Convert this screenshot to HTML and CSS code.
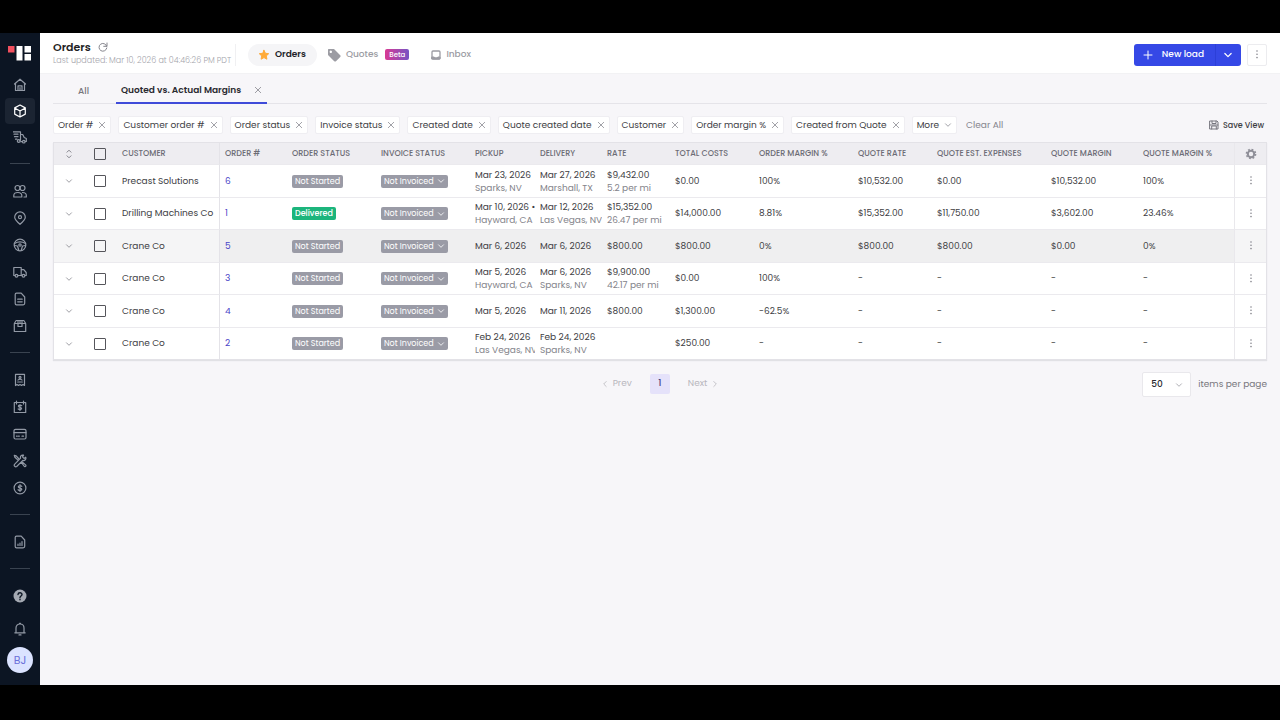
FILE: index.html
```html
<!DOCTYPE html>
<html lang="en">
<head>
<meta charset="utf-8">
<meta name="viewport" content="width=device-width, initial-scale=1">
<title>Orders</title>
<link rel="stylesheet" href="styles.css">
</head>
<body>
<svg class="sprite" aria-hidden="true">
  <symbol id="i-x" viewBox="0 0 8 8"><path d="M1.300 1.300l5.400 5.400M6.700 1.300L1.300 6.700"/></symbol>
  <symbol id="i-down" viewBox="0 0 8 8"><path d="M1.500 2.800L4 5.300l2.500-2.500"/></symbol>
  <symbol id="i-dots" viewBox="0 0 4 12"><g fill="currentColor" stroke="none"><circle cx="2" cy="2" r=".8"/><circle cx="2" cy="5.300" r=".8"/><circle cx="2" cy="8.600" r=".8"/></g></symbol>
</svg>
<div class="app">
  <aside class="sidebar">
    <svg class="logo" viewBox="0 0 24 16" aria-label="Logo"><path fill="#f2505f" d="M0 0h6.500v6.500H0z"/><path fill="#fff" d="M8.500 0h6v14.500h-6zM16.500 0h6.500v6.500h-6.500zM16.500 8h6.500v6.500h-6.500z"/></svg>
    <nav class="nav" aria-label="Main">
      <div class="group group-top">
        <a href="#" class="nav-item" aria-label="Home"><svg viewBox="0 0 14 14"><path d="M1.500 6L7 1.200 12.500 6M2.500 5.300v7.200h9V5.300M5 12.300V7.800h4v4.500M7 9.500v2.500"/></svg></a>
        <a href="#" class="nav-item active" aria-label="Orders"><svg viewBox="0 0 14 14"><path d="M7 1l5.300 2.900v6.200L7 13l-5.300-2.900V3.900zM1.700 3.900L7 6.900l5.300-3M7 6.900V13"/></svg></a>
        <a href="#" class="nav-item" aria-label="Dispatch"><svg viewBox="0 0 14 14"><path d="M0 1.800h7.500v8.400H7M1 4.200h4M1.500 6.700H5M2.500 9.200H4M7.500 4.500h2.200l1.500 3 2.100 1v3h-1.100M9.300 11.700H7.800"/><circle cx="5.700" cy="11" r="1.400"/><circle cx="10.800" cy="11.700" r="1.300"/></svg></a>
      </div>
      <hr class="sep">
      <div class="group">
        <a href="#" class="nav-item" aria-label="Customers"><svg viewBox="0 0 14 14"><circle cx="4.500" cy="4" r="2.500"/><circle cx="9.500" cy="4" r="2.500"/><path d="M.8 13v-1.500c0-2 1.500-3 4-3s4 1 4 3V13zM9.500 8.500c2.500 0 3.800 1.200 3.800 3V13H11"/></svg></a>
        <a href="#" class="nav-item" aria-label="Locations"><svg viewBox="0 0 14 14"><path d="M7 13.300C4 10.700 1.700 8.700 1.700 6.200a5.300 5.300 0 0 1 10.600 0c0 2.500-2.300 4.500-5.300 7.100z"/><circle cx="7" cy="6.200" r="1.500"/></svg></a>
        <a href="#" class="nav-item" aria-label="Drivers"><svg viewBox="0 0 14 14"><circle cx="7" cy="7" r="5.800"/><path d="M1.500 5.500C5 3.500 9 3.500 12.500 5.500M1.500 7.500L4.500 8l1.300 4.500M12.500 7.500L9.500 8l-1.300 4.500"/><circle cx="7" cy="7" r="1.200"/></svg></a>
        <a href="#" class="nav-item" aria-label="Trucks"><svg viewBox="0 0 14 14"><path d="M2 10.500H.8V2.500h7.400v8H5M8.200 4.700h2.600l2.400 2.800v3H12M8.200 10.500H9"/><circle cx="3.500" cy="10.800" r="1.400"/><circle cx="10.500" cy="10.800" r="1.400"/></svg></a>
        <a href="#" class="nav-item" aria-label="Documents"><svg viewBox="0 0 14 14"><path d="M3.500 1.200h4.700L11.700 5v6.300c0 1-.5 1.500-1.500 1.500H3.500c-.8 0-1.300-.5-1.300-1.300v-9c0-.8.500-1.300 1.300-1.300zM4.700 7.200h4.500M4.700 9.800h4.500"/></svg></a>
        <a href="#" class="nav-item" aria-label="Inventory"><svg viewBox="0 0 14 14"><path d="M1.300 4.500h11.400v8H1.300zM1.300 4.500l1.900-3h7.600l1.900 3M5 1.500v6h4v-6M7 1.500v3"/></svg></a>
      </div>
      <hr class="sep">
      <div class="group">
        <a href="#" class="nav-item" aria-label="Bills"><svg viewBox="0 0 14 14"><path d="M2.500 1.300h9v11.200l-1.500-1-1.500 1-1.500-1-1.500 1-1.500-1-1.500 1zM4.700 9h4.600"/><circle cx="7" cy="4.400" r="1"/><path d="M5 7c.8-1 3.200-1 4 0"/></svg></a>
        <a href="#" class="nav-item" aria-label="Payroll"><svg viewBox="0 0 14 14"><path d="M1.300 2.500h11.400v10H1.300zM3.500 1v3M10.500 1v3M8.700 5.700c-1-.9-3.400-.6-3.300.6.100 1.300 3.200.9 3.200 2.300 0 1.200-2.300 1.400-3.400.4M7 4.700v5.700"/></svg></a>
        <a href="#" class="nav-item" aria-label="Cards"><svg viewBox="0 0 14 14"><rect x="1" y="2.300" width="12" height="9.700" rx="1.500"/><path d="M1 5.700h12M3.500 9.200h.8M5.500 9.200h.8M9 9.200h1.500"/></svg></a>
        <a href="#" class="nav-item" aria-label="Maintenance"><svg viewBox="0 0 14 14"><path d="M1.300 1.300l1.900.5 2.800 3.200M1.300 1.300l.6 1.900L5 6.100M8.300 8.300l3.100 4.200c1.200.5 2-.7 1.200-1.600L9.500 8.200M12.700 3.200L11 4.400l-1.500-1.500 1.100-1.700C8 .6 7 2.500 7.600 4.200L1.500 10.300c-1 1.400.9 3.200 2.200 2.200l6.100-6.100c1.900.6 3.700-1.200 2.900-3.200z"/></svg></a>
        <a href="#" class="nav-item" aria-label="Payments"><svg viewBox="0 0 14 14"><circle cx="7" cy="7" r="5.900"/><path d="M8.800 5.300c-1-1-3.600-.7-3.500.6.100 1.400 3.500 1 3.500 2.400 0 1.300-2.600 1.400-3.700.4M7 3.500v7"/></svg></a>
      </div>
      <hr class="sep">
      <div class="group">
        <a href="#" class="nav-item" aria-label="Reports"><svg viewBox="0 0 14 14"><path d="M3.500 1.200h4.700L11.700 5v6.300c0 1-.5 1.500-1.500 1.500H3.500c-.8 0-1.300-.5-1.300-1.300v-9c0-.8.500-1.300 1.300-1.300zM5 10.500V9.200M7 10.500V8M9 10.500V6.500"/></svg></a>
      </div>
      <hr class="sep">
      <div class="group">
        <a href="#" class="nav-item" aria-label="Help"><svg viewBox="0 0 14 14"><circle cx="7" cy="7" r="6.500" fill="#a4a9b2" stroke="none"/><path stroke="#0c1523" stroke-width="1.400" d="M5 5.500c.1-2.300 4-2.300 4 0 0 1.400-2 1.500-2 3M7 10.300v.4"/></svg></a>
      </div>
    </nav>
    <button class="nav-item bell" aria-label="Notifications"><svg viewBox="0 0 14 14"><path d="M1.800 10.800h10.400M3 10.800V6c0-2.300 1.500-4 4-4s4 1.700 4 4v4.800M6.500 1.300h1M6 12.900h2"/></svg></button>
    <button class="avatar">BJ</button>
  </aside>

  <main class="main">
    <header class="topbar">
      <div class="title-block">
        <div class="title-row"><h1>Orders</h1><button class="plain" aria-label="Refresh"><svg class="ic10" viewBox="0 0 10 10"><path d="M8.700 4.200A3.900 3.900 0 1 0 8.800 6M9 1v3.300H5.700"/></svg></button></div>
        <p class="updated">Last updated: Mar 10, 2026 at 04:46:26 PM PDT</p>
      </div>
      <nav class="modes" aria-label="Views">
        <a href="#" class="mode current"><svg class="ic12" viewBox="0 0 12 12"><path fill="#ffab38" stroke="#ffab38" d="M6 1.300l1.400 3 3.300.4-2.400 2.200.6 3.300L6 8.600l-2.900 1.600.6-3.300L1.300 4.700l3.300-.4z"/></svg>Orders</a>
        <a href="#" class="mode quotes"><svg class="ic14" viewBox="0 0 14 14"><path fill="#9c9ca3" stroke="none" fill-rule="evenodd" d="M1.500 1H7l6 6c.8.800.8 1.500 0 2.200L9.200 13c-.7.700-1.400.7-2.200 0L1 7V1.500zM3.800 2.600a1.200 1.200 0 1 0 .01 0z"/></svg>Quotes<span class="beta">Beta</span></a>
        <a href="#" class="mode inbox"><svg class="ic10" viewBox="0 0 10 10"><rect x="1" y="1" width="8" height="8" rx="1" stroke-width="1.300"/><path d="M1 7h2l1 .8h2L7 7h2v2H1z" fill="#9c9ca3"/></svg>Inbox</a>
      </nav>
      <div class="split">
        <button class="new"><svg class="ic10" viewBox="0 0 10 10"><path d="M5 1v8M1 5h8"/></svg>New load</button>
        <button class="new-more" aria-label="More load options"><svg class="ic10" viewBox="0 0 8 8"><use href="#i-down"/></svg></button>
      </div>
      <button class="kebab-box" aria-label="Page options"><svg class="dots"><use href="#i-dots"/></svg></button>
    </header>

    <div class="content">
      <nav class="tabs" aria-label="Saved views">
        <a href="#" class="tab all">All</a>
        <div class="tab on"><a href="#">Quoted vs. Actual Margins</a><button class="plain" aria-label="Close view"><svg class="ic8"><use href="#i-x"/></svg></button></div>
      </nav>

      <div class="filters">
        <button class="chip">Order #<svg class="ic8"><use href="#i-x"/></svg></button>
        <button class="chip">Customer order #<svg class="ic8"><use href="#i-x"/></svg></button>
        <button class="chip">Order status<svg class="ic8"><use href="#i-x"/></svg></button>
        <button class="chip">Invoice status<svg class="ic8"><use href="#i-x"/></svg></button>
        <button class="chip">Created date<svg class="ic8"><use href="#i-x"/></svg></button>
        <button class="chip">Quote created date<svg class="ic8"><use href="#i-x"/></svg></button>
        <button class="chip">Customer<svg class="ic8"><use href="#i-x"/></svg></button>
        <button class="chip">Order margin %<svg class="ic8"><use href="#i-x"/></svg></button>
        <button class="chip">Created from Quote<svg class="ic8"><use href="#i-x"/></svg></button>
        <button class="chip">More<svg class="ic8"><use href="#i-down"/></svg></button>
        <button class="plain clear">Clear All</button>
        <button class="plain save"><svg class="ic10" viewBox="0 0 10 10"><path d="M1 1h7l1 1v7H1zM3 1v2.500h4V1M2.700 9V6h4.600v3M1 5h8"/></svg>Save View</button>
      </div>

      <table class="orders">
        <colgroup><col class="w30"><col class="w32"><col class="w104"><col class="w67"><col class="w89"><col class="w94"><col class="w65"><col class="w67"><col class="w68"><col class="w84"><col class="w99"><col class="w79"><col class="w114"><col class="w92"><col class="w96"><col class="w32"></colgroup>
        <thead>
          <tr><th class="mid"><button class="plain" aria-label="Expand all"><svg class="ic10" viewBox="0 0 10 10"><path d="M3 3.200l2-2 2 2M3 6.800l2 2 2-2"/></svg></button></th><th class="mid"><input type="checkbox" aria-label="Select all orders"></th><th class="edge">Customer</th><th>Order #</th><th>Order status</th><th>Invoice status</th><th>Pickup</th><th>Delivery</th><th>Rate</th><th>Total costs</th><th>Order margin %</th><th>Quote rate</th><th>Quote est. expenses</th><th>Quote margin</th><th>Quote margin %</th><th class="mid last"><button class="plain" aria-label="Table settings"><svg class="ic12 gear" viewBox="0 0 12 12"><circle cx="6" cy="6" r="3.200" stroke-width="2"/><circle cx="6" cy="6" r="4.600" stroke-width="1.500" stroke-dasharray="1.800 1.813"/></svg></button></th></tr>
        </thead>
        <tbody>
          <tr><td class="mid"><button class="plain" aria-label="Expand order 6"><svg class="ic8"><use href="#i-down"/></svg></button></td><td class="mid"><input type="checkbox" aria-label="Select order 6"></td><td class="edge">Precast Solutions</td><td><a href="#">6</a></td><td><span class="badge">Not Started</span></td><td><button class="badge">Not Invoiced<svg class="ic8"><use href="#i-down"/></svg></button></td><td>Mar 23, 2026<small>Sparks, NV</small></td><td>Mar 27, 2026<small>Marshall, TX</small></td><td>$9,432.00<small>5.2 per mi</small></td><td>$0.00</td><td>100%</td><td>$10,532.00</td><td>$0.00</td><td>$10,532.00</td><td>100%</td><td class="mid last"><button class="plain" aria-label="Order 6 actions"><svg class="dots"><use href="#i-dots"/></svg></button></td></tr>
          <tr><td class="mid"><button class="plain" aria-label="Expand order 1"><svg class="ic8"><use href="#i-down"/></svg></button></td><td class="mid"><input type="checkbox" aria-label="Select order 1"></td><td class="edge">Drilling Machines Co</td><td><a href="#">1</a></td><td><span class="badge green">Delivered</span></td><td><button class="badge">Not Invoiced<svg class="ic8"><use href="#i-down"/></svg></button></td><td>Mar 10, 2026 •<small>Hayward, CA</small></td><td>Mar 12, 2026<small>Las Vegas, NV</small></td><td>$15,352.00<small>26.47 per mi</small></td><td>$14,000.00</td><td>8.81%</td><td>$15,352.00</td><td>$11,750.00</td><td>$3,602.00</td><td>23.46%</td><td class="mid last"><button class="plain" aria-label="Order 1 actions"><svg class="dots"><use href="#i-dots"/></svg></button></td></tr>
          <tr class="hovered"><td class="mid"><button class="plain" aria-label="Expand order 5"><svg class="ic8"><use href="#i-down"/></svg></button></td><td class="mid"><input type="checkbox" aria-label="Select order 5"></td><td class="edge">Crane Co</td><td><a href="#">5</a></td><td><span class="badge">Not Started</span></td><td><button class="badge">Not Invoiced<svg class="ic8"><use href="#i-down"/></svg></button></td><td>Mar 6, 2026</td><td>Mar 6, 2026</td><td>$800.00</td><td>$800.00</td><td>0%</td><td>$800.00</td><td>$800.00</td><td>$0.00</td><td>0%</td><td class="mid last"><button class="plain" aria-label="Order 5 actions"><svg class="dots"><use href="#i-dots"/></svg></button></td></tr>
          <tr><td class="mid"><button class="plain" aria-label="Expand order 3"><svg class="ic8"><use href="#i-down"/></svg></button></td><td class="mid"><input type="checkbox" aria-label="Select order 3"></td><td class="edge">Crane Co</td><td><a href="#">3</a></td><td><span class="badge">Not Started</span></td><td><button class="badge">Not Invoiced<svg class="ic8"><use href="#i-down"/></svg></button></td><td>Mar 5, 2026<small>Hayward, CA</small></td><td>Mar 6, 2026<small>Sparks, NV</small></td><td>$9,900.00<small>42.17 per mi</small></td><td>$0.00</td><td>100%</td><td>-</td><td>-</td><td>-</td><td>-</td><td class="mid last"><button class="plain" aria-label="Order 3 actions"><svg class="dots"><use href="#i-dots"/></svg></button></td></tr>
          <tr><td class="mid"><button class="plain" aria-label="Expand order 4"><svg class="ic8"><use href="#i-down"/></svg></button></td><td class="mid"><input type="checkbox" aria-label="Select order 4"></td><td class="edge">Crane Co</td><td><a href="#">4</a></td><td><span class="badge">Not Started</span></td><td><button class="badge">Not Invoiced<svg class="ic8"><use href="#i-down"/></svg></button></td><td>Mar 5, 2026</td><td>Mar 11, 2026</td><td>$800.00</td><td>$1,300.00</td><td>-62.5%</td><td>-</td><td>-</td><td>-</td><td>-</td><td class="mid last"><button class="plain" aria-label="Order 4 actions"><svg class="dots"><use href="#i-dots"/></svg></button></td></tr>
          <tr><td class="mid"><button class="plain" aria-label="Expand order 2"><svg class="ic8"><use href="#i-down"/></svg></button></td><td class="mid"><input type="checkbox" aria-label="Select order 2"></td><td class="edge">Crane Co</td><td><a href="#">2</a></td><td><span class="badge">Not Started</span></td><td><button class="badge">Not Invoiced<svg class="ic8"><use href="#i-down"/></svg></button></td><td>Feb 24, 2026<small>Las Vegas, NV</small></td><td>Feb 24, 2026<small>Sparks, NV</small></td><td></td><td>$250.00</td><td>-</td><td>-</td><td>-</td><td>-</td><td>-</td><td class="mid last"><button class="plain" aria-label="Order 2 actions"><svg class="dots"><use href="#i-dots"/></svg></button></td></tr>
        </tbody>
      </table>

      <footer class="pager">
        <nav class="pages" aria-label="Pagination">
          <button class="plain step"><svg class="ic8 left"><use href="#i-down"/></svg>Prev</button>
          <button class="page">1</button>
          <button class="plain step">Next<svg class="ic8 right"><use href="#i-down"/></svg></button>
        </nav>
        <div class="per-page">
          <div class="select"><select id="size"><option>50</option><option>100</option></select><svg class="ic8"><use href="#i-down"/></svg></div>
          <label for="size">items per page</label>
        </div>
      </footer>
    </div>
  </main>
</div>
</body>
</html>
```
FILE: styles.css
```css
* { box-sizing: border-box; }
body {
  margin: 0;
  padding: 33px 0 35px;
  min-height: 100vh;
  display: flex;
  background: #000;
  color: #3d3d43;
  font: 9px/13px Poppins, Inter, sans-serif;
}
h1, p { margin: 0; }
a { color: inherit; text-decoration: none; }
button, select { font: inherit; color: inherit; border: 0; margin: 0; cursor: pointer; }
svg { fill: none; stroke: currentColor; stroke-linecap: round; stroke-linejoin: round; flex: none; display: block; }
.sprite { position: absolute; width: 0; height: 0; }
.ic8 { width: 8px; height: 8px; stroke-width: 0.8; }
.ic10 { width: 10px; height: 10px; }
.ic12 { width: 12px; height: 12px; }
.ic14 { width: 14px; height: 14px; }
.dots { width: 4px; height: 12px; color: #85858d; }
.plain { display: inline-flex; align-items: center; padding: 0; background: none; color: #85858d; }

.app { flex: 1; display: flex; min-width: 0; }
.sidebar { width: 40px; flex: none; display: flex; flex-direction: column; align-items: center; background: #0c1523; }
.logo { width: 24px; height: 16px; margin: 13px 0 10px; stroke: none; }
.nav { display: flex; flex-direction: column; align-items: center; }
.nav-item { display: flex; align-items: center; justify-content: center; width: 30px; height: 27px; padding: 0; border-radius: 4px; background: none; color: #9299a5; }
.nav-item svg { width: 14px; height: 14px; stroke-width: 1.2; }
.group-top .nav-item { height: 26px; }
.nav-item.active { background: #1b2432; color: #fff; }
.sep { width: 20px; height: 1px; margin: 13px 0; border: 0; background: #3a4350; }
.bell { margin-top: 6px; }
.avatar { width: 26px; height: 26px; margin-top: 5px; padding: 0; border-radius: 50%; background: #dbe3ff; color: #6a70da; font-size: 11px; }

.main { flex: 1; min-width: 0; background: #f7f6f9; }
.topbar { display: flex; align-items: center; height: 41px; padding: 3px 13px 0; background: #fff; border-bottom: 1px solid #f2f2f4; }
.title-block { width: 182px; padding-bottom: 3px; }
.title-row { display: flex; align-items: center; gap: 7px; }
h1 { font-size: 11px; line-height: 15px; font-weight: 600; color: #1f1f25; }
.updated { font-size: 8px; line-height: 12px; font-weight: 300; color: #a5a5ac; white-space: nowrap; }
.modes { display: flex; align-items: center; flex: 1; padding-left: 12px; border-left: 1px solid #f0f0f2; gap: 10px; }
.mode { display: flex; align-items: center; gap: 5px; font-weight: 500; color: #9c9ca3; }
.current { height: 22px; padding: 0 11px 0 10px; border-radius: 11px; background: #f5f5f7; color: #222228; font-weight: 600; }
.beta { margin-left: 2px; padding: 0 4px; border-radius: 2px; background: linear-gradient(90deg, #d83a94, #7754c4); color: #fff; font-size: 7px; line-height: 11px; }
.inbox { margin-left: 12px; }
.split { display: flex; height: 22px; border-radius: 3px; overflow: hidden; }
.split button { display: flex; align-items: center; background: #3548e6; color: #fff; font-weight: 500; }
.new { gap: 9px; padding: 0 11px 0 9px; }
.new-more { padding: 0 8px 0 7px; border-left: 1px solid #2c3fd8; }
.kebab-box { display: grid; place-items: center; width: 20px; height: 22px; margin-left: 6px; padding: 0; background: #fff; border: 1px solid #ececef; border-radius: 2px; }

.content { padding: 0 13px; }
.tabs { display: flex; height: 30px; border-bottom: 1px solid #e5e4e9; }
.tab { display: flex; align-items: center; height: 30px; padding-top: 4px; font-weight: 500; color: #77777d; }
.all { padding-left: 25px; padding-right: 27px; }
.on { gap: 13px; padding-left: 5px; padding-right: 5px; border-bottom: 2px solid #3f4bd9; color: #2a2a30; font-weight: 600; }
.filters { display: flex; align-items: center; gap: 7px; margin: 12px 0 8px; }
.chip { display: flex; align-items: center; gap: 5px; height: 18px; padding: 0 4px; background: #fff; border: 1px solid #efeef2; border-radius: 2px; white-space: nowrap; }
.chip svg { color: #8a8a92; }
.clear { margin-left: 2px; white-space: nowrap; }
.save { margin-left: auto; gap: 4px; padding-right: 3px; font-size: 8px; font-weight: 500; color: #3d3d43; white-space: nowrap; }
.save svg { color: #77777f; }

.orders { width: 100%; table-layout: fixed; border-collapse: separate; border-spacing: 0; background: #fff; border: 1px solid #e3e2e7; box-shadow: 0 1px 1px #e1e1e5; }
.w30 { width: 30px; } .w32 { width: 32px; } .w65 { width: 65px; }
.w67 { width: 67px; } .w68 { width: 68px; } .w79 { width: 79px; } .w84 { width: 84px; }
.w89 { width: 89px; } .w92 { width: 92px; } .w94 { width: 94px; } .w96 { width: 96px; }
.w99 { width: 99px; } .w104 { width: 104px; } .w114 { width: 114px; }
th { height: 21px; padding: 0 0 0 5px; background: #eeedf1; color: #6c6c75; font-size: 8px; font-weight: 500; text-align: left; text-transform: uppercase; white-space: nowrap; }
td { height: 32px; padding: 0 0 0 5px; border-top: 1px solid #ebeaee; white-space: nowrap; overflow: hidden; }
tbody tr:nth-child(odd) td { height: 33px; }
.hovered td { background: #efeff0; }
.hovered .edge, .hovered .mid { background: #f5f5f6; }
.orders .edge { padding-left: 6px; border-right: 1px solid #e4e3e8; }
.last { border-left: 1px solid #e9e8ec; }
.orders .mid { padding: 0; text-align: center; }
.mid .plain { vertical-align: middle; }
td a { color: #4a45c8; }
small { display: block; font-size: 9px; line-height: 12px; color: #83838a; }
input[type="checkbox"] { appearance: none; display: block; width: 12px; height: 12px; margin: 0 auto; border: 1px solid #55555b; border-radius: 1px; background: transparent; }
.badge { display: inline-flex; align-items: center; gap: 3px; height: 13px; padding: 0 3px; border-radius: 2px; background: #9a9ba6; color: #fff; font-size: 8px; vertical-align: middle; }
.green { background: #1cb57c; font-weight: 500; }
.gear { color: #8f8f98; stroke-linecap: butt; }

.pager { display: grid; grid-template-columns: 1fr auto 1fr; align-items: center; margin-top: 12px; }
.pages { grid-column: 2; display: flex; align-items: center; gap: 18px; padding-bottom: 2px; }
.step { gap: 4px; color: #b7b6bd; }
.left { transform: rotate(90deg); }
.right { transform: rotate(-90deg); }
.page { width: 20px; height: 20px; padding: 0; background: #e5e2fa; border-radius: 2px; font-weight: 500; color: #4a4680; }
.per-page { display: flex; align-items: center; justify-content: flex-end; gap: 7px; color: #77777d; }
.select { position: relative; }
.select select { appearance: none; width: 49px; height: 25px; padding: 0 8px; background: #fff; border: 1px solid #e9e8ec; border-radius: 2px; color: #2a2a30; font-weight: 500; }
.select svg { position: absolute; right: 8px; top: 9px; color: #9a9aa2; pointer-events: none; }
```
